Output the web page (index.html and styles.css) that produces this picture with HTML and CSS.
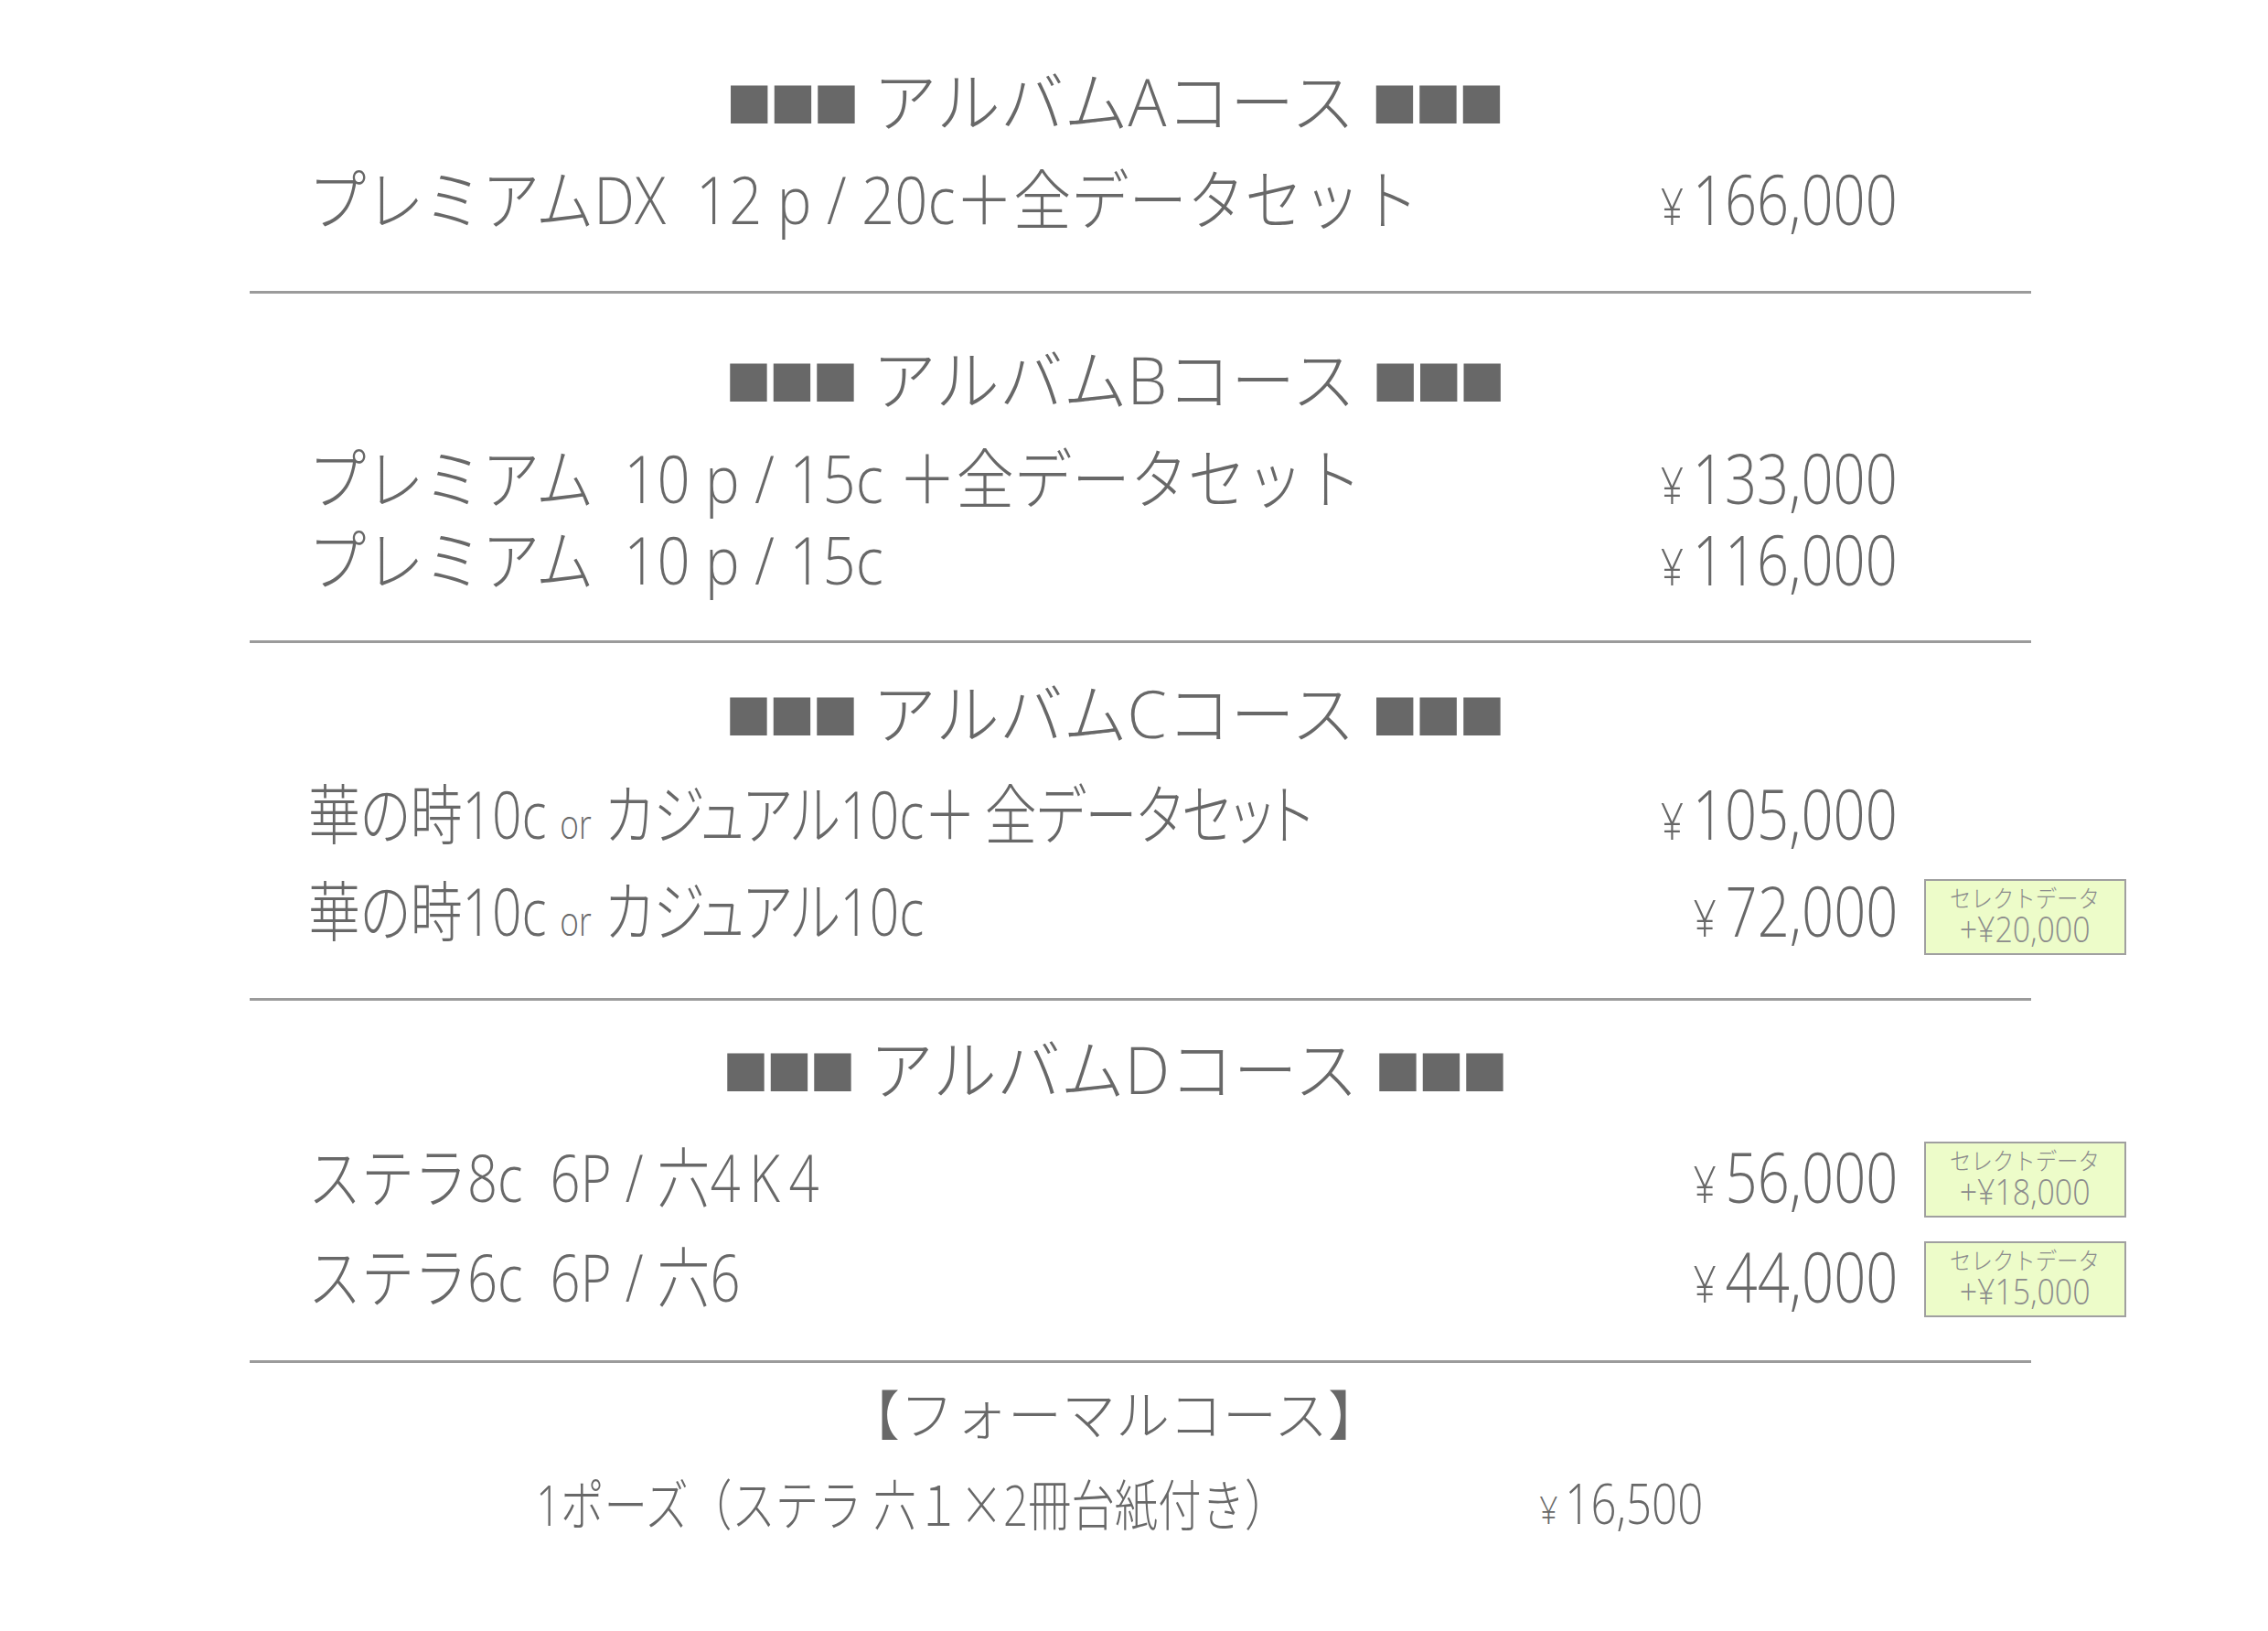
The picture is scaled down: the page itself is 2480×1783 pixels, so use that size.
FILE: index.html
```html
<!DOCTYPE html>
<html lang="ja">
<head>
    <meta charset="UTF-8">
    <meta name="viewport" content="width=device-width, initial-scale=1.0">
    <title>アルバムコース 料金表</title>
    <link rel="stylesheet" href="styles.css">
</head>
<body>
    <main class="menu">
        <section class="course course-a">
            <h2 class="course-title"><span class="squeeze"><span class="marks">■■■</span> アルバムAコース <span class="marks">■■■</span></span></h2>
            <div class="item">
                <span class="item-name"><span class="squeeze">プレミアムDX&nbsp; 12 p / 20c＋全データセット</span></span>
                <span class="price"><span class="squeeze"><span class="yen">¥</span>166,000</span></span>
            </div>
        </section>

        <hr class="rule">

        <section class="course course-b">
            <h2 class="course-title"><span class="squeeze"><span class="marks">■■■</span> アルバムBコース <span class="marks">■■■</span></span></h2>
            <div class="item">
                <span class="item-name"><span class="squeeze">プレミアム&nbsp; 10 p / 15c ＋全データセット</span></span>
                <span class="price"><span class="squeeze"><span class="yen">¥</span>133,000</span></span>
            </div>
            <div class="item">
                <span class="item-name"><span class="squeeze">プレミアム&nbsp; 10 p / 15c</span></span>
                <span class="price"><span class="squeeze"><span class="yen">¥</span>116,000</span></span>
            </div>
        </section>

        <hr class="rule">

        <section class="course course-c">
            <h2 class="course-title"><span class="squeeze"><span class="marks">■■■</span> アルバムCコース <span class="marks">■■■</span></span></h2>
            <div class="item">
                <span class="item-name"><span class="squeeze">華の時10c <span class="small">or</span> カジュアル10c＋&#8201;全データセット</span></span>
                <span class="price"><span class="squeeze"><span class="yen">¥</span>105,000</span></span>
            </div>
            <div class="item">
                <span class="item-name"><span class="squeeze">華の時10c <span class="small">or</span> カジュアル10c</span></span>
                <span class="price"><span class="squeeze"><span class="yen">¥</span>72,000</span></span>
                <div class="badge badge-c">
                    <span class="badge-label">セレクトデータ</span>
                    <span class="badge-price">+¥20,000</span>
                </div>
            </div>
        </section>

        <hr class="rule">

        <section class="course course-d">
            <h2 class="course-title"><span class="squeeze"><span class="marks">■■■</span> アルバムDコース <span class="marks">■■■</span></span></h2>
            <div class="item">
                <span class="item-name"><span class="squeeze">ステラ8c&nbsp; 6P / 六4&#8201;K&#8201;4</span></span>
                <span class="price"><span class="squeeze"><span class="yen">¥</span>56,000</span></span>
                <div class="badge">
                    <span class="badge-label">セレクトデータ</span>
                    <span class="badge-price">+¥18,000</span>
                </div>
            </div>
            <div class="item">
                <span class="item-name"><span class="squeeze">ステラ6c&nbsp; 6P / 六6</span></span>
                <span class="price"><span class="squeeze"><span class="yen">¥</span>44,000</span></span>
                <div class="badge">
                    <span class="badge-label">セレクトデータ</span>
                    <span class="badge-price">+¥15,000</span>
                </div>
            </div>
        </section>

        <hr class="rule">

        <section class="formal">
            <h2 class="formal-title"><span class="squeeze">【フォーマルコース】</span></h2>
            <div class="formal-item">
                <span class="item-name"><span class="squeeze">1ポーズ（ステラ 六１<span class="cjk">×</span>2冊台紙付き）</span></span>
                <span class="price"><span class="squeeze"><span class="yen">¥</span>16,500</span></span>
            </div>
        </section>
    </main>
</body>
</html>
```

FILE: styles.css
```css
* {
    margin: 0;
    padding: 0;
    box-sizing: border-box;
}

body {
    font-family: "Open Sans", "Noto Sans CJK JP", sans-serif;
    font-weight: 300;
    background: #fff;
    color: #686868;
}

.menu {
    margin-left: 273px;
    width: 2052px;
    padding-top: 60px;
}

/* condensed look of the original typeface */
.squeeze {
    display: inline-block;
    white-space: nowrap;
    transform: scaleX(0.88);
    transform-origin: left center;
}

.rule {
    width: 1948px;
    height: 3px;
    border: none;
    background: #9b9b9b;
}

.course-title {
    width: 1948px;
    height: 100px;
    padding-right: 58px;
    font-size: 72px;
    font-weight: 300;
    line-height: 100px;
    text-align: center;
}

.course-title .squeeze {
    transform: scaleX(0.97);
    transform-origin: center center;
}

.marks {
    font-size: 52px;
    letter-spacing: -3px;
    vertical-align: 4px;
}

.item {
    display: grid;
    grid-template-columns: minmax(0, 1fr) auto 221px;
    column-gap: 29px;
    align-items: center;
    height: 100px;
    padding: 8px 0 0 64px;
    font-size: 72px;
}

.item-name {
    line-height: 1;
    min-width: 0;
}

.small {
    font-size: 0.62em;
}

.price {
    font-size: 76px;
    line-height: 1;
    text-align: right;
}

.price .squeeze {
    transform: scaleX(0.81);
    transform-origin: right center;
}

.yen {
    font-size: 0.72em;
    margin-right: 0.22em;
}

.course-a .item { margin-top: 3px; }
.course-a { padding-bottom: 55px; }

.course-b { padding: 43px 0 49px; }
.course-b .course-title { margin-bottom: 9px; }
.course-b .item { height: 89px; }

.course-c { padding: 26px 0 47px; }
.course-c .course-title { margin-bottom: 3px; }
.course-c .item { height: 106px; }
.course-c .item-name .squeeze {
    transform: scaleX(0.79);
    font-feature-settings: "palt";
}

.course-d { padding: 24px 0 42px; }
.course-d .course-title { margin-bottom: 9px; }
.course-d .item { height: 109px; }
.course-d .item-name .squeeze {
    transform: scaleX(0.805);
}

.badge {
    grid-column: 3;
    display: flex;
    flex-direction: column;
    align-items: center;
    height: 83px;
    margin-top: 8px;
    padding-top: 4px;
    background: #edfcc9;
    border: 2px solid #a0a0a0;
    color: #8c8c8c;
}

.badge-c {
    margin-top: 14px;
}

.badge-label {
    display: inline-block;
    font-size: 26px;
    line-height: 30px;
    transform: scaleX(0.9);
}

.badge-price {
    display: inline-block;
    font-size: 39px;
    line-height: 36px;
    transform: scaleX(0.87);
}

.formal {
    padding-top: 16px;
}

.formal-title {
    width: 1948px;
    height: 80px;
    padding-right: 58px;
    font-size: 59px;
    font-weight: 300;
    line-height: 80px;
    text-align: center;
}

.formal-title .squeeze {
    transform: none;
}

.formal-item {
    display: grid;
    grid-template-columns: minmax(0, 1fr) auto;
    align-items: center;
    width: 1276px;
    height: 80px;
    margin: 14px 0 0 313px;
    padding-top: 6px;
    font-size: 60px;
}

.formal-item .squeeze {
    transform: scaleX(0.79);
}

.cjk {
    font-family: "Noto Sans CJK JP", sans-serif;
}

.formal-item .price {
    font-size: 60px;
}

.formal-item .price .squeeze {
    transform: scaleX(0.82);
    transform-origin: right center;
}
```
